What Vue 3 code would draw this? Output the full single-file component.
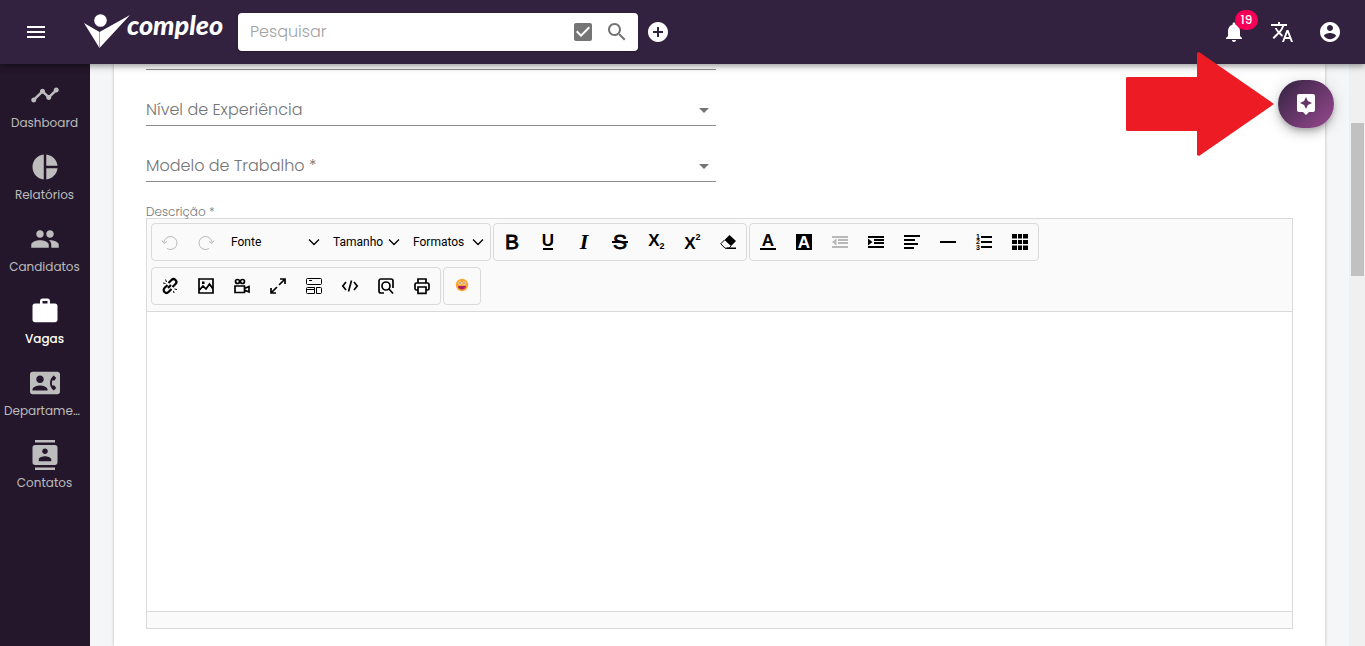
<script setup>
import { ref } from 'vue'

const search = ref('')
const level = ref('')
const model = ref('')
const description = ref('')

const icons = {
  menu: 'M3 18h18v-2H3v2zm0-5h18v-2H3v2zm0-7v2h18V6H3z',
  check: 'M19 3H5c-1.11 0-2 .9-2 2v14c0 1.1.89 2 2 2h14c1.11 0 2-.9 2-2V5c0-1.1-.89-2-2-2zm-9 14l-5-5 1.41-1.41L10 14.17l7.59-7.59L19 8l-9 9z',
  search: 'M15.5 14h-.79l-.28-.27C15.41 12.59 16 11.11 16 9.5 16 5.91 13.09 3 9.5 3S3 5.91 3 9.5 5.91 16 9.5 16c1.61 0 3.09-.59 4.23-1.57l.27.28v.79l5 4.99L20.49 19l-4.99-5zm-6 0C7.01 14 5 11.99 5 9.5S7.01 5 9.5 5 14 7.01 14 9.5 11.99 14 9.5 14z',
  add: 'M12 2C6.48 2 2 6.48 2 12s4.48 10 10 10 10-4.48 10-10S17.52 2 12 2zm5 11h-4v4h-2v-4H7v-2h4V7h2v4h4v2z',
  bell: 'M12 22c1.1 0 2-.9 2-2h-4c0 1.1.89 2 2 2zm6-6v-5c0-3.07-1.64-5.64-4.5-6.32V4c0-.83-.67-1.5-1.5-1.5s-1.5.67-1.5 1.5v.68C7.63 5.36 6 7.92 6 11v5l-2 2v1h16v-1l-2-2z',
  translate: 'M12.87 15.07l-2.54-2.51.03-.03c1.74-1.94 2.98-4.17 3.71-6.53H17V4h-7V2H8v2H1v1.99h11.17C11.5 7.92 10.44 9.75 9 11.35 8.07 10.32 7.3 9.19 6.69 8h-2c.73 1.63 1.73 3.17 2.98 4.56l-5.09 5.02L4 19l5-5 3.11 3.11.76-2.04zM18.5 10h-2L12 22h2l1.12-3h4.75L21 22h2l-4.5-12zm-2.62 7l1.62-4.33L19.12 17h-3.24z',
  account: 'M12 2C6.48 2 2 6.48 2 12s4.48 10 10 10 10-4.48 10-10S17.52 2 12 2zm0 3c1.66 0 3 1.34 3 3s-1.34 3-3 3-3-1.34-3-3 1.34-3 3-3zm0 14.2c-2.5 0-4.71-1.28-6-3.22.03-1.99 4-3.08 6-3.08 1.99 0 5.97 1.09 6 3.08-1.29 1.94-3.5 3.22-6 3.22z',
  assistant: 'M19 2H5c-1.11 0-2 .9-2 2v14c0 1.1.89 2 2 2h4l3 3 3-3h4c1.1 0 2-.9 2-2V4c0-1.1-.9-2-2-2zm-5.12 10.88L12 17l-1.88-4.12L6 11l4.12-1.88L12 5l1.88 4.12L18 11l-4.12 1.88z',
}

const nav = [
  { label: 'Dashboard', d: 'M23 8c0 1.1-.9 2-2 2-.18 0-.35-.02-.51-.07l-3.56 3.55c.05.16.07.34.07.52 0 1.1-.9 2-2 2s-2-.9-2-2c0-.18.02-.36.07-.52l-2.55-2.55c-.16.05-.34.07-.52.07s-.36-.02-.52-.07l-4.55 4.56c.05.16.07.33.07.51 0 1.1-.9 2-2 2s-2-.9-2-2 .9-2 2-2c.18 0 .35.02.51.07l4.56-4.55C8.02 9.36 8 9.18 8 9c0-1.1.9-2 2-2s2 .9 2 2c0 .18-.02.36-.07.52l2.55 2.55c.16-.05.34-.07.52-.07s.36.02.52.07l3.55-3.56C19.02 8.35 19 8.18 19 8c0-1.1.9-2 2-2s2 .9 2 2z' },
  { label: 'Relatórios', d: 'M11 2v20c-5.07-.5-9-4.79-9-10s3.93-9.5 9-10zm2.03 0v8.99H22c-.47-4.74-4.24-8.52-8.97-8.99zm0 11.01V22c4.74-.47 8.5-4.25 8.97-8.99h-8.97z' },
  { label: 'Candidatos', d: 'M16 11c1.66 0 2.99-1.34 2.99-3S17.66 5 16 5c-1.66 0-3 1.34-3 3s1.34 3 3 3zm-8 0c1.66 0 2.99-1.34 2.99-3S9.66 5 8 5C6.34 5 5 6.34 5 8s1.34 3 3 3zm0 2c-2.33 0-7 1.17-7 3.5V19h14v-2.5c0-2.33-4.67-3.5-7-3.5zm8 0c-.29 0-.62.02-.97.05 1.16.84 1.97 1.97 1.97 3.45V19h6v-2.5c0-2.33-4.67-3.5-7-3.5z' },
  { label: 'Vagas', active: true, d: 'M20 6h-4V4c0-1.11-.89-2-2-2h-4c-1.11 0-2 .89-2 2v2H4c-1.11 0-1.99.89-1.99 2L2 19c0 1.11.89 2 2 2h16c1.11 0 2-.89 2-2V8c0-1.11-.89-2-2-2zm-6 0h-4V4h4v2z' },
  { label: 'Departamentos', d: 'M22 3H2C.9 3 0 3.9 0 5v14c0 1.1.9 2 2 2h20c1.1 0 1.99-.9 1.99-2L24 5c0-1.1-.9-2-2-2zM8 6c1.66 0 3 1.34 3 3s-1.34 3-3 3-3-1.34-3-3 1.34-3 3-3zm6 12H2v-1c0-2 4-3.1 6-3.1s6 1.1 6 3.1v1zm3.85-4h1.64L21 16l-1.99 1.99c-1.31-.98-2.28-2.38-2.73-3.99-.18-.64-.28-1.31-.28-2s.1-1.36.28-2c.45-1.62 1.42-3.01 2.73-3.99L21 8l-1.51 2h-1.64c-.22.63-.35 1.3-.35 2s.13 1.37.35 2z' },
  { label: 'Contatos', d: 'M20 0H4v2h16V0zM4 24h16v-2H4v2zM20 4H4c-1.1 0-2 .9-2 2v12c0 1.1.9 2 2 2h16c1.1 0 2-.9 2-2V6c0-1.1-.9-2-2-2zm-8 2.75c1.24 0 2.25 1.01 2.25 2.25s-1.01 2.25-2.25 2.25S9.75 10.24 9.75 9 10.76 6.75 12 6.75zM17 17H7v-1.5c0-1.67 3.33-2.5 5-2.5s5 .83 5 2.5V17z' },
]

const history = [
  { label: 'Desfazer', off: true, line: 'M5 14.5A6.500 6.500 0 1 0 2 8.500M0 6.500l2 3 3-2' },
  { label: 'Refazer', off: true, line: 'M11 14.500A6.500 6.500 0 1 1 14 8.500M16 6.500l-2 3-3-2' },
]

const menus = [
  { label: 'Fonte', size: 'wide' },
  { label: 'Tamanho', size: 'small' },
  { label: 'Formatos', size: 'medium' },
]

const styleTools = [
  { label: 'Negrito', text: [{ t: 'B', x: 8, y: 15, c: 'bold' }] },
  { label: 'Sublinhado', text: [{ t: 'U', x: 8, y: 12, c: 'heavy' }], fill: 'M3 14h10v2H3z' },
  { label: 'Itálico', text: [{ t: 'I', x: 8, y: 15, c: 'italic' }] },
  { label: 'Tachado', text: [{ t: 'S', x: 8, y: 15, c: 'bold' }], fill: 'M0 7h16v2H0z' },
  { label: 'Subscrito', text: [{ t: 'X', x: 6, y: 12, c: 'script' }, { t: '2', x: 14, y: 15, c: 'tiny' }] },
  { label: 'Sobrescrito', text: [{ t: 'X', x: 6, y: 15, c: 'script' }, { t: '2', x: 14, y: 6, c: 'tiny' }] },
  { label: 'Remover formato', fill: 'M9.5 1l6.5 6-5 5-6.5-6zM7 13.5h9V15H6z', line: 'M4.5 6L.8 9.8 5 14.200h4l2-2.200' },
]

const blockTools = [
  { label: 'Cor do texto', text: [{ t: 'A', x: 8, y: 12, c: 'heavy' }], fill: 'M0 14h16v2H0z' },
  { label: 'Cor de fundo', fill: 'M0 0h16v16H0z', text: [{ t: 'A', x: 8, y: 14, c: 'reverse' }] },
  { label: 'Diminuir recuo', off: true, fill: 'M0 2h16v2H0zM6 5h10v2H6zM6 8h10v2H6zM0 12h16v2H0zM4.5 4.500v7L0 8z' },
  { label: 'Aumentar recuo', fill: 'M0 2h16v2H0zM6 5h10v2H6zM6 8h10v2H6zM0 12h16v2H0zM0 4.500v7L4.500 8z' },
  { label: 'Alinhar', fill: 'M0 1h16v2H0zM0 5h11v2H0zM0 9h14v2H0zM0 13h10v2H0z' },
  { label: 'Linha horizontal', fill: 'M0 7h16v2H0z' },
  { label: 'Lista', fill: 'M5 2h11v2H5zM5 7h11v2H5zM5 12h11v2H5z', text: [{ t: '1', x: 2, y: 5, c: 'number' }, { t: '2', x: 2, y: 10, c: 'number' }, { t: '3', x: 2, y: 16, c: 'number' }] },
  { label: 'Tabela', fill: 'M0 0h5v4.500H0zM6 0h4v4.500H6zM11 0h5v4.500h-5zM0 6h5v4H0zM6 6h4v4H6zM11 6h5v4h-5zM0 11.500h5V16H0zM6 11.500h4V16H6zM11 11.500h5V16h-5z' },
]

const insertTools = [
  { label: 'Link', bold: 'M6.500 5l3-3a2.800 2.800 0 0 1 4 4l-3 3M9.500 11l-3 3a2.800 2.800 0 0 1-4-4l3-3M6 10l3-3', line: 'M3.500 1.500l1 2.500M1 5l2.500.5M12.500 11l2.500.5M11.500 13l.5 2' },
  { label: 'Imagem', thick: 'M1 1h14v14H1zM1.500 12l3.500-4 3 3 3.500-5 3.500 5', fill: 'M4 3.500h2.500V6H4z' },
  { label: 'Vídeo', thick: 'M1 8h9.500v6.500H1zM10.500 10.500l4.500-2v5.500l-4.500-2M5.500 3.500a2 2 0 1 1-4 0 2 2 0 1 1 4 0zM10.500 3.500a2 2 0 1 1-4 0 2 2 0 1 1 4 0z' },
  { label: 'Tela cheia', thick: 'M10 1h5v5M15 1L9 7M6 15H1v-5M1 15l6-6' },
  { label: 'Blocos', line: 'M1.500.5h13a1 1 0 0 1 1 1v4a1 1 0 0 1-1 1h-13a1 1 0 0 1-1-1v-4a1 1 0 0 1 1-1zM1.500 9.500h7v6h-7a1 1 0 0 1-1-1v-4a1 1 0 0 1 1-1zM10.500 9.500h4a1 1 0 0 1 1 1v4a1 1 0 0 1-1 1h-4zM3 2.500h3M.5 11.500h8' },
  { label: 'Código', thick: 'M4 4L.8 8 4 12M12 4l3.200 4L12 12M9.500 2.500l-3 11' },
  { label: 'Visualizar', thick: 'M6 15H3a2 2 0 0 1-2-2V3a2 2 0 0 1 2-2h10a2 2 0 0 1 2 2v7M12 8a4 4 0 1 1-8 0 4 4 0 1 1 8 0zM11 11l4 4.500' },
  { label: 'Imprimir', thick: 'M4 12H2.500a1.500 1.500 0 0 1-1.500-1.500v-4A1.500 1.500 0 0 1 2.500 5h11A1.500 1.500 0 0 1 15 6.500v4a1.500 1.500 0 0 1-1.500 1.500H12M4 5V1h8v4M4 9h8v6.300H4z' },
]

const firstRow = [history, styleTools, blockTools]
</script>

<template>
  <div class="app">
    <header class="topbar">
      <button class="icon-btn" aria-label="Menu"><svg viewBox="0 0 24 24"><path :d="icons.menu" /></svg></button>
      <a class="brand" href="#">
        <svg class="mark" viewBox="0 0 46 34">
          <path d="M0 9L15.500 18 46 1 15.500 34z" />
          <circle cx="16.500" cy="7.500" r="7.500" class="gap" />
          <circle cx="16.500" cy="6.500" r="6.300" />
          <path d="M15.500 18v16" class="crease" />
        </svg>
        <span class="wordmark">compleo</span>
      </a>
      <form class="search" @submit.prevent>
        <input v-model="search" type="text" placeholder="Pesquisar" aria-label="Pesquisar">
        <button type="button" aria-label="Selecionar"><svg viewBox="0 0 24 24"><path :d="icons.check" /></svg></button>
        <button type="submit" aria-label="Buscar"><svg viewBox="0 0 24 24"><path :d="icons.search" /></svg></button>
      </form>
      <button class="add" aria-label="Adicionar"><svg viewBox="0 0 24 24"><path :d="icons.add" /></svg></button>
      <div class="actions">
        <button class="icon-btn" aria-label="Notificações"><svg viewBox="0 0 24 24"><path :d="icons.bell" /></svg><span class="badge">19</span></button>
        <button class="icon-btn" aria-label="Idioma"><svg viewBox="0 0 24 24"><path :d="icons.translate" /></svg></button>
        <button class="icon-btn" aria-label="Conta"><svg viewBox="0 0 24 24"><path :d="icons.account" /></svg></button>
      </div>
    </header>

    <div class="body">
      <nav class="sidebar">
        <a v-for="n in nav" :key="n.label" href="#" :class="{ active: n.active }">
          <svg viewBox="0 0 24 24"><path :d="n.d" /></svg>
          <span>{{ n.label }}</span>
        </a>
      </nav>

      <main class="content">
        <section class="paper">
          <div class="fields">
            <div class="field-end"></div>
            <div class="field">
              <label for="level">Nível de Experiência</label>
              <select id="level" v-model="level"></select>
              <svg viewBox="0 0 24 24"><path d="M7 10l5 5 5-5z" /></svg>
            </div>
            <div class="field">
              <label for="model">Modelo de Trabalho *</label>
              <select id="model" v-model="model"></select>
              <svg viewBox="0 0 24 24"><path d="M7 10l5 5 5-5z" /></svg>
            </div>
          </div>

          <label class="caption" for="description">Descrição *</label>
          <div class="editor">
            <div class="toolbar">
              <div class="tools">
                <div v-for="(group, g) in firstRow" :key="g" class="group">
                  <button v-for="b in group" :key="b.label" :aria-label="b.label" :disabled="b.off">
                    <svg viewBox="0 0 16 16">
                      <path v-if="b.fill" :d="b.fill" />
                      <path v-if="b.line" :d="b.line" class="line" />
                      <text v-for="t in b.text" :key="t.t" :x="t.x" :y="t.y" :class="t.c">{{ t.t }}</text>
                    </svg>
                  </button>
                  <template v-if="g === 0">
                    <div v-for="m in menus" :key="m.label" class="menu" :class="m.size">
                      <select :aria-label="m.label"><option>{{ m.label }}</option></select>
                      <svg viewBox="0 0 12 12"><path d="M1 3.500l5 5 5-5" class="chevron" /></svg>
                    </div>
                  </template>
                </div>
              </div>
              <div class="tools">
                <div class="group">
                  <button v-for="b in insertTools" :key="b.label" :aria-label="b.label">
                    <svg viewBox="0 0 16 16">
                      <path v-if="b.fill" :d="b.fill" />
                      <path v-if="b.line" :d="b.line" class="line" />
                      <path v-if="b.thick" :d="b.thick" class="thick" />
                      <path v-if="b.bold" :d="b.bold" class="extra" />
                    </svg>
                  </button>
                </div>
                <div class="group">
                  <button aria-label="Emoji">
                    <svg viewBox="0 0 16 16">
                      <circle cx="8" cy="7" r="6.200" fill="#fba630" />
                      <circle cx="6" cy="5" r="1.500" fill="#fff" />
                      <circle cx="10" cy="5" r="1.500" fill="#fff" />
                      <circle cx="6" cy="5" r="0.700" fill="#4b2b20" />
                      <circle cx="10" cy="5" r="0.700" fill="#4b2b20" />
                      <path d="M4 8h8c0 2.200-1.800 3.500-4 3.500S4 10.200 4 8z" fill="#a8206a" />
                    </svg>
                  </button>
                </div>
              </div>
            </div>
            <textarea id="description" v-model="description"></textarea>
            <div class="status"></div>
          </div>
        </section>
      </main>
      <div class="scrollbar"><div class="thumb"></div></div>
    </div>

    <button class="fab" aria-label="Assistente"><svg viewBox="0 0 24 24"><path :d="icons.assistant" /></svg></button>
    <svg class="arrow" viewBox="0 0 148 104"><path d="M1 25h70V1l2-1 75 52-75 52-2-1V79H1l-1-1V26z" /></svg>
  </div>
</template>

<style>
body { margin: 0; overflow: hidden; }
</style>

<style scoped>
* { box-sizing: border-box; }
.app { position: relative; display: flex; flex-direction: column; height: 100vh; font-family: Poppins, Inter, sans-serif; background: #f4f6f8; overflow: hidden; }
button { display: flex; align-items: center; justify-content: center; padding: 0; border: 0; background: none; color: inherit; font: inherit; cursor: pointer; }
button svg { width: 24px; height: 24px; fill: currentColor; }
select, input, textarea { border: 0; outline: 0; background: none; font: inherit; appearance: none; }
a { text-decoration: none; color: inherit; }

.topbar { position: relative; z-index: 2; display: flex; flex: none; align-items: center; height: 64px; padding: 0 11px 0 12px; background: #322240; color: #fff; box-shadow: 0 2px 4px -1px rgba(0, 0, 0, .2), 0 4px 5px rgba(0, 0, 0, .14), 0 1px 10px rgba(0, 0, 0, .12); }
.icon-btn { position: relative; width: 48px; height: 48px; }
.brand { display: flex; align-items: flex-start; width: 138px; height: 36px; margin: 0 16px 0 24px; }
.mark { flex: none; width: 46px; height: 34px; fill: #fff; }
.mark .gap { fill: #322240; }
.mark .crease { stroke: #aaa2b1; stroke-width: 1; }
.wordmark { margin-left: -3px; font: italic 900 27px/22px Lato, sans-serif; }
.search { display: flex; align-items: center; width: 400px; height: 38px; padding: 0 9px 0 12px; border-radius: 4px; background: #fff; color: #757575; box-shadow: 0 1px 2px rgba(0, 0, 0, .3); }
.search input { flex: 1; min-width: 0; padding: 0 0 2px; font-size: 16px; font-weight: 300; color: #333; }
.search input::placeholder { color: #a2a2a2; opacity: 1; }
.search button { margin-left: 10px; }
.add { margin-left: 8px; }
.actions { display: flex; margin-left: auto; }
.badge { position: absolute; top: 2px; right: 0; width: 23px; height: 20px; border-radius: 10px; background: #f50057; font-size: 12px; font-weight: 500; line-height: 20px; text-align: center; }

.body { display: flex; flex: 1; min-height: 0; }
.sidebar { display: flex; flex: none; flex-direction: column; width: 90px; padding: 10px 1px 0 0; background: #24172b; color: #bdbdbd; font-size: 12px; }
.sidebar a { display: flex; flex-direction: column; align-items: center; height: 72px; padding-top: 6px; line-height: 18px; }
.sidebar svg { width: 30px; height: 30px; margin-bottom: 4px; fill: currentColor; }
.sidebar span { max-width: 81px; overflow: hidden; text-overflow: ellipsis; white-space: nowrap; }
.sidebar .active { color: #fff; font-weight: 500; }

.content { flex: 1; min-width: 0; padding: 0 24px; overflow: hidden; }
.paper { min-height: 100%; padding: 0 32px; background: #fff; box-shadow: 0 0 3px rgba(0, 0, 0, .25); }
.fields { width: calc(50% - 4px); color: #757575; font-size: 16px; font-weight: 300; }
.field-end { height: 6px; border-bottom: 1px solid #8c8c8c; }
.field { display: grid; align-items: center; height: 56px; padding-top: 24px; border-bottom: 1px solid #8c8c8c; }
.field > * { grid-area: 1 / 1; }
.field select { width: 100%; height: 30px; }
.field svg { justify-self: end; width: 24px; height: 24px; fill: #757575; pointer-events: none; }
.caption { display: block; padding-top: 24px; color: #757575; font-size: 12px; font-weight: 300; line-height: 12px; }

.editor { border: 1px solid #dadada; background: #fafafa; color: #000; font-family: Roboto, "Liberation Sans", sans-serif; font-size: 12px; }
.toolbar { display: flex; flex-direction: column; gap: 6px; padding: 4px 4px 6px; border-bottom: 1px solid #dadada; }
.tools { display: flex; gap: 2px; }
.group { display: flex; border: 1px solid #dadada; border-radius: 4px; }
.group button { width: 36px; height: 36px; }
.group button svg { width: 16px; height: 16px; overflow: visible; }
.group button:disabled { color: #b9b9b9; }
.line, .thick, .extra, .chevron { fill: none; stroke: currentColor; stroke-width: 1; }
.thick { stroke-width: 1.7; }
.extra { stroke-width: 2.2; }
.chevron { stroke-width: 1.3; }
.menu { display: grid; align-items: center; }
.menu > * { grid-area: 1 / 1; }
.menu select { width: 100%; height: 36px; padding: 0 20px 0 7px; color: #000; }
.menu svg { justify-self: end; width: 12px; height: 12px; margin-right: 6px; pointer-events: none; }
.wide { width: 102px; }
.small { width: 80px; }
.medium { width: 84px; }
text { fill: currentColor; text-anchor: middle; font-family: "Liberation Sans", sans-serif; font-weight: 700; }
.bold { font-size: 21px; font-weight: 400; stroke: currentColor; stroke-width: .8; }
.heavy { font-size: 17px; }
.italic { font: italic 700 22px "Liberation Serif", serif; }
.script { font-size: 17px; font-weight: 700; }
.tiny { font-size: 9px; }
.number { font-size: 7px; }
.reverse { fill: #fff; font-size: 17px; }
textarea { display: block; width: 100%; height: 299px; padding: 10px; background: #fff; resize: none; }
.status { height: 17px; border-top: 1px solid #dadada; }

.scrollbar { flex: none; width: 16px; padding: 59px 1px 0 2px; background: #f0f0f0; }
.thumb { height: 153px; background: #c1c1c1; }
.fab { position: absolute; z-index: 3; top: 80px; right: 31px; width: 56px; height: 48px; border-radius: 24px; color: #fff; background: linear-gradient(135deg, #322240, #984a90); box-shadow: 0 3px 5px -1px rgba(0, 0, 0, .2), 0 6px 10px rgba(0, 0, 0, .14), 0 1px 18px rgba(0, 0, 0, .12); }
.arrow { position: absolute; z-index: 4; top: 52px; right: 91px; width: 148px; height: 104px; fill: #ed1c24; pointer-events: none; }
</style>
